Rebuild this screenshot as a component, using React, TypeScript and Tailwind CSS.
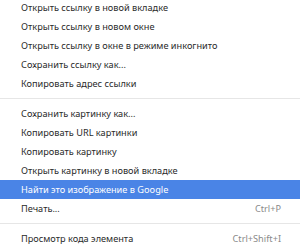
import React from "react";

type Item = { label: string; shortcut?: string; active?: boolean } | "sep";

const items: Item[] = [
  { label: "Открыть ссылку в новой вкладке" },
  { label: "Открыть ссылку в новом окне" },
  { label: "Открыть ссылку в окне в режиме инкогнито" },
  { label: "Сохранить ссылку как..." },
  { label: "Копировать адрес ссылки" },
  "sep",
  { label: "Сохранить картинку как..." },
  { label: "Копировать URL картинки" },
  { label: "Копировать картинку" },
  { label: "Открыть картинку в новой вкладке" },
  { label: "Найти это изображение в Google", active: true },
  { label: "Печать...", shortcut: "Ctrl+P" },
  "sep",
  { label: "Просмотр кода элемента", shortcut: "Ctrl+Shift+I" },
];

export default function App() {
  return (
    <div
      className="w-[300px] h-[247px] overflow-hidden bg-white text-[9.2px] text-[#2a2a2a]"
      style={{ fontFamily: '"Noto Sans", "Open Sans", sans-serif' }}
    >
      <div className="-mt-[2px] flex flex-col">
        {items.map((it, i) =>
          it === "sep" ? (
            <div key={i} className="my-[5px] h-px bg-[#e6e6e6]" />
          ) : (
            <div
              key={i}
              className={
                "flex h-[19px] items-center justify-between pl-[21px] pr-[19px] leading-none " +
                (it.active ? "bg-[#4a84e6] text-white" : "")
              }
            >
              <span>{it.label}</span>
              {it.shortcut && <span className="text-[#8a8a8a]">{it.shortcut}</span>}
            </div>
          )
        )}
      </div>
    </div>
  );
}
